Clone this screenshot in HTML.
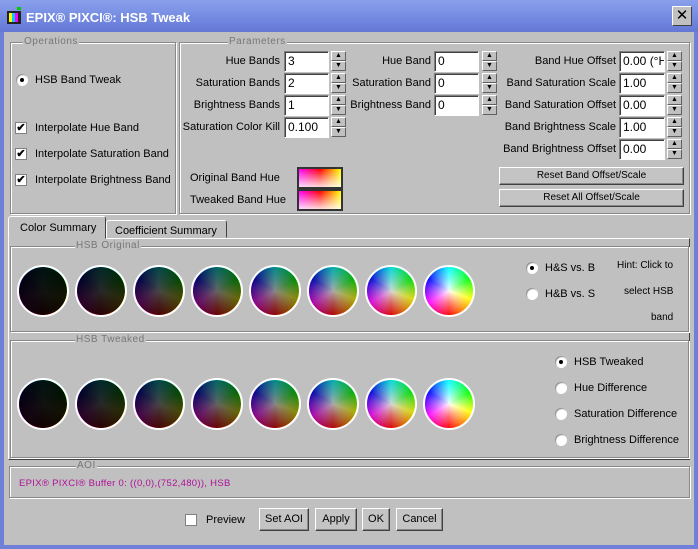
<!DOCTYPE html>
<html><head><meta charset="utf-8"><style>
*{box-sizing:border-box}
body{margin:0;width:698px;height:549px;overflow:hidden;font-family:"Liberation Sans",sans-serif;font-size:11px;color:#000;background:#6f7fd8}
#win{position:absolute;left:0;top:0;width:698px;height:549px;background:#c0c0c0;border:4px solid #7080d8;border-top:0}
#title{position:absolute;left:0;top:0;width:698px;height:32px;background:linear-gradient(#8aa0ec,#7288e0 60%,#6478d4);color:#fff;font-weight:bold;font-size:13px}
#title span{position:absolute;left:26px;top:10px}
.close{position:absolute;right:6px;top:6px;width:20px;height:20px;background:#c0c0c0;border:1px solid;border-color:#fff #404040 #404040 #fff;color:#000;font-size:15px;text-align:center;line-height:18px;font-weight:normal}
.a{position:absolute;white-space:nowrap}
.grp{position:absolute;border:1px solid #888;box-shadow:inset 1px 1px 0 #fff,1px 1px 0 #fff}
.leg{position:absolute;top:-7px;background:#c0c0c0;color:#777;padding:0 1px;font-size:10px;letter-spacing:.5px}
.inp{position:absolute;height:21px;background:#fff;border:1px solid;border-color:#808080 #fff #fff #808080;box-shadow:inset 1px 1px 0 #404040;padding:2px 3px;font-size:12px;white-space:nowrap;overflow:hidden}
.spin{position:absolute;width:15px;height:20px}
.spin i{display:block;height:10px;border:1px solid;border-color:#fff #606060 #606060 #fff;background:#c0c0c0;font-style:normal;font-size:7px;line-height:8px;text-align:center}
.lbl{position:absolute;text-align:right;font-size:11px}
.btn{position:absolute;background:#c4c4c4;border:1px solid;border-color:#fff #404040 #404040 #fff;box-shadow:inset -1px -1px 0 #888;text-align:center;font-size:11px}
.rad{position:absolute;width:12px;height:12px;border-radius:50%;background:#fff;box-shadow:inset 1px 1px 1px #888}
.rad.on:after{content:"";position:absolute;left:4px;top:4px;width:4px;height:4px;border-radius:50%;background:#000}
.chk{position:absolute;width:12px;height:12px;background:#fff;border:1px solid #808080;font-size:11px;line-height:10px;text-align:center;font-weight:bold}
.w{position:absolute;width:52px;height:52px;border-radius:50%;border:2px solid #fff;background:conic-gradient(from 0deg,#0ff,#0f0 60deg,#ff0 110deg,#f00 180deg,#f0f 240deg,#00f 300deg,#0ff);overflow:hidden}
.w:before{content:"";position:absolute;inset:0;border-radius:50%;background:radial-gradient(circle,rgba(255,255,255,.95) 0,rgba(255,255,255,.45) 35%,rgba(255,255,255,0) 75%)}
.w:after{content:"";position:absolute;inset:0;border-radius:50%;background:#000;opacity:var(--d)}
.sw{position:absolute;width:46px;height:22px;border:2px solid #333;background:linear-gradient(to bottom,rgba(255,255,255,0),rgba(255,255,255,.85)),linear-gradient(to right,#f0f,#f00 50%,#ff0)}
</style></head><body>
<div id="win"></div>
<div id="title"><svg class="a" style="left:6px;top:7px" width="16" height="18"><rect x="1" y="4" width="14" height="13" fill="#222"/><rect x="3" y="6" width="3" height="9" fill="#ff0"/><rect x="6" y="6" width="3" height="9" fill="#0cf"/><rect x="9" y="6" width="3" height="9" fill="#f0f"/><rect x="11" y="0" width="4" height="3" fill="#0c0"/></svg><span>EPIX® PIXCI®: HSB Tweak</span><div class="close">✕</div></div>

<div class="grp" style="left:10px;top:42px;width:166px;height:172px"><span class="leg" style="left:12px">Operations</span></div>
<div class="rad on" style="left:16px;top:74px"></div><div class="a" style="left:35px;top:74px">HSB Band Tweak</div>
<div class="chk" style="left:15px;top:122px">✔</div><div class="a" style="left:35px;top:122px">Interpolate Hue Band</div>
<div class="chk" style="left:15px;top:148px">✔</div><div class="a" style="left:35px;top:148px">Interpolate Saturation Band</div>
<div class="chk" style="left:15px;top:174px">✔</div><div class="a" style="left:35px;top:174px">Interpolate Brightness Band</div>

<div class="grp" style="left:179px;top:42px;width:511px;height:172px"><span class="leg" style="left:48px">Parameters</span></div>

<div class="lbl" style="left:180px;width:100px;top:55px">Hue Bands</div><div class="inp" style="left:284px;top:51px;width:45px">3</div>
<div class="lbl" style="left:180px;width:100px;top:77px">Saturation Bands</div><div class="inp" style="left:284px;top:73px;width:45px">2</div>
<div class="lbl" style="left:180px;width:100px;top:99px">Brightness Bands</div><div class="inp" style="left:284px;top:95px;width:45px">1</div>
<div class="lbl" style="left:180px;width:100px;top:121px">Saturation Color Kill</div><div class="inp" style="left:284px;top:117px;width:45px">0.100</div>

<div class="lbl" style="left:340px;width:91px;top:55px">Hue Band</div><div class="inp" style="left:434px;top:51px;width:45px">0</div>
<div class="lbl" style="left:340px;width:91px;top:77px">Saturation Band</div><div class="inp" style="left:434px;top:73px;width:45px">0</div>
<div class="lbl" style="left:340px;width:91px;top:99px">Brightness Band</div><div class="inp" style="left:434px;top:95px;width:45px">0</div>

<div class="lbl" style="left:495px;width:121px;top:55px">Band Hue Offset</div><div class="inp" style="left:619px;top:51px;width:46px">0.00 (°H</div>
<div class="lbl" style="left:495px;width:121px;top:77px">Band Saturation Scale</div><div class="inp" style="left:619px;top:73px;width:46px">1.00</div>
<div class="lbl" style="left:495px;width:121px;top:99px">Band Saturation Offset</div><div class="inp" style="left:619px;top:95px;width:46px">0.00</div>
<div class="lbl" style="left:495px;width:121px;top:121px">Band Brightness Scale</div><div class="inp" style="left:619px;top:117px;width:46px">1.00</div>
<div class="lbl" style="left:495px;width:121px;top:143px">Band Brightness Offset</div><div class="inp" style="left:619px;top:139px;width:46px">0.00</div>

<div class="spin" style="left:331px;top:51px"><i>▲</i><i>▼</i></div>
<div class="spin" style="left:331px;top:73px"><i>▲</i><i>▼</i></div>
<div class="spin" style="left:331px;top:95px"><i>▲</i><i>▼</i></div>
<div class="spin" style="left:331px;top:117px"><i>▲</i><i>▼</i></div>
<div class="spin" style="left:482px;top:51px"><i>▲</i><i>▼</i></div>
<div class="spin" style="left:482px;top:73px"><i>▲</i><i>▼</i></div>
<div class="spin" style="left:482px;top:95px"><i>▲</i><i>▼</i></div>
<div class="spin" style="left:667px;top:51px"><i>▲</i><i>▼</i></div>
<div class="spin" style="left:667px;top:73px"><i>▲</i><i>▼</i></div>
<div class="spin" style="left:667px;top:95px"><i>▲</i><i>▼</i></div>
<div class="spin" style="left:667px;top:117px"><i>▲</i><i>▼</i></div>
<div class="spin" style="left:667px;top:139px"><i>▲</i><i>▼</i></div>

<div class="btn" style="left:499px;top:167px;width:185px;height:18px;line-height:15px;font-size:10px">Reset Band Offset/Scale</div>
<div class="btn" style="left:499px;top:189px;width:185px;height:18px;line-height:15px;font-size:10px">Reset All Offset/Scale</div>

<div class="a" style="left:190px;top:172px">Original Band Hue</div><div class="sw" style="left:297px;top:167px"></div>
<div class="a" style="left:190px;top:194px">Tweaked Band Hue</div><div class="sw" style="left:297px;top:189px"></div>

<div class="a" style="left:8px;top:238px;width:682px;height:222px;border:1px solid;border-color:#fff #404040 #404040 #fff"></div>
<div class="a" style="left:8px;top:216px;width:98px;height:23px;background:#c0c0c0;border:1px solid;border-color:#fff #404040 transparent #fff;border-radius:3px 3px 0 0;padding:5px 0 0 11px">Color Summary</div>
<div class="a" style="left:106px;top:220px;width:121px;height:18px;border:1px solid;border-color:#fff #404040 transparent #fff;border-radius:3px 3px 0 0;padding:4px 0 0 8px">Coefficient Summary</div>

<div class="grp" style="left:10px;top:246px;width:679px;height:86px"><span class="leg" style="left:64px">HSB Original</span></div>
<div class="grp" style="left:10px;top:340px;width:679px;height:118px"><span class="leg" style="left:64px">HSB Tweaked</span></div>

<div class="w" style="left:17px;top:265px;--d:.93"></div>
<div class="w" style="left:75px;top:265px;--d:.84"></div>
<div class="w" style="left:133px;top:265px;--d:.72"></div>
<div class="w" style="left:191px;top:265px;--d:.6"></div>
<div class="w" style="left:249px;top:265px;--d:.46"></div>
<div class="w" style="left:307px;top:265px;--d:.32"></div>
<div class="w" style="left:365px;top:265px;--d:.15"></div>
<div class="w" style="left:423px;top:265px;--d:0"></div>

<div class="w" style="left:17px;top:378px;--d:.93"></div>
<div class="w" style="left:75px;top:378px;--d:.84"></div>
<div class="w" style="left:133px;top:378px;--d:.72"></div>
<div class="w" style="left:191px;top:378px;--d:.6"></div>
<div class="w" style="left:249px;top:378px;--d:.46"></div>
<div class="w" style="left:307px;top:378px;--d:.32"></div>
<div class="w" style="left:365px;top:378px;--d:.15"></div>
<div class="w" style="left:423px;top:378px;--d:0"></div>

<div class="rad on" style="left:526px;top:262px"></div><div class="a" style="left:545px;top:262px">H&amp;S vs. B</div>
<div class="rad" style="left:526px;top:288px"></div><div class="a" style="left:545px;top:288px">H&amp;B vs. S</div>
<div class="a" style="left:617px;top:260px;font-size:10px">Hint: Click to</div>
<div class="a" style="left:624px;top:286px;font-size:10px">select HSB</div>
<div class="a" style="left:651px;top:312px;font-size:10px">band</div>

<div class="rad on" style="left:555px;top:356px"></div><div class="a" style="left:574px;top:356px">HSB Tweaked</div>
<div class="rad" style="left:555px;top:382px"></div><div class="a" style="left:574px;top:382px">Hue Difference</div>
<div class="rad" style="left:555px;top:408px"></div><div class="a" style="left:574px;top:408px">Saturation Difference</div>
<div class="rad" style="left:555px;top:434px"></div><div class="a" style="left:574px;top:434px">Brightness Difference</div>

<div class="grp" style="left:9px;top:466px;width:681px;height:32px"><span class="leg" style="left:66px">AOI</span></div>
<div class="a" style="left:19px;top:478px;color:#b0109a;font-size:9.5px;letter-spacing:.3px">EPIX® PIXCI® Buffer 0: ((0,0),(752,480)), HSB</div>

<div class="chk" style="left:185px;top:514px;background:#fff;border-color:#808080"></div>
<div class="a" style="left:206px;top:514px">Preview</div>
<div class="btn" style="left:259px;top:508px;width:50px;height:23px;line-height:20px">Set AOI</div>
<div class="btn" style="left:315px;top:508px;width:42px;height:23px;line-height:20px">Apply</div>
<div class="btn" style="left:362px;top:508px;width:28px;height:23px;line-height:20px">OK</div>
<div class="btn" style="left:396px;top:508px;width:47px;height:23px;line-height:20px">Cancel</div>
</body></html>
